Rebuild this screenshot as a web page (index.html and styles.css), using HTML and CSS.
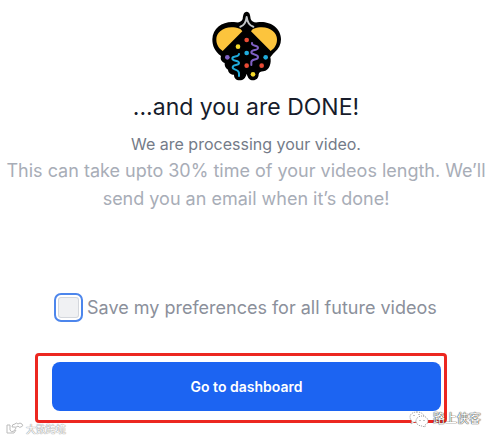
FILE: index.html
```
<!DOCTYPE html>
<html lang="en">
<head>
<meta charset="UTF-8">
<meta name="viewport" content="width=device-width, initial-scale=1.0">
<title>Processing your video</title>
<link rel="stylesheet" href="styles.css">
</head>
<body>
<main class="done">
    <!-- party popper logo -->
    <svg class="logo" viewBox="0 0 276 246" aria-hidden="true">
        <path d="M140 20C149 20 151 31 152 42C155 49 162 53 172 52C205 46 243 66 243 103C243 119 236 132 224 142C217 149 214 153 211 157C215 173 209 197 190 199C182 199 178 201 176 208C176 219 169 226 159 226C149 226 144 220 140 206C136 220 130 226 119 226C108 226 102 219 102 209C93 209 85 204 84 194C77 190 73 183 74 174C64 170 60 162 63 153C44 139 37 123 37 103C38 66 74 46 108 52C118 53 125 49 128 42C129 31 131 20 140 20Z" fill="#000"/>
        <path d="M119 71C79 57 49 79 49 103C49 119 56 130 68 138L127 79C125 75 122 72 119 71Z" fill="#fcc43d"/>
        <path d="M161 71C201 57 231 79 231 103C231 119 224 130 212 138L153 79C155 75 158 72 161 71Z" fill="#fcc43d"/>
        <path d="M121 65C132 62 138 52 140 36C142 52 149 62 160 65" fill="none" stroke="#c4c7c9" stroke-width="6" stroke-linecap="round" stroke-linejoin="round"/>
        <path d="M117 147C116 159 96 151 97 161C98 170 117 164 117 174C117 183 98 177 98 187C98 197 118 190 117 207V213" fill="none" stroke="#20acdc" stroke-width="6" stroke-linecap="round"/>
        <path d="M156 114C154 126 175 119 174 129C173 138 154 132 154 142C154 151 175 146 174 157C173 167 153 160 154 172V180" fill="none" stroke="#8061c5" stroke-width="6" stroke-linecap="round"/>
        <circle cx="140" cy="105" r="7" fill="#e94b35"/>
        <circle cx="140" cy="182" r="7" fill="#e94b35"/>
        <circle cx="185" cy="182" r="7" fill="#e94b35"/>
        <circle cx="114" cy="125" r="7" fill="#f5da2a"/>
        <circle cx="159" cy="208" r="7" fill="#f5da2a"/>
        <circle cx="140" cy="144" r="7" fill="#20acdc"/>
        <circle cx="197" cy="157" r="7" fill="#20acdc"/>
        <circle cx="82" cy="157" r="7" fill="#8061c5"/>
    </svg>

    <h1>...and you are DONE!</h1>
    <p class="status">We are processing your video.</p>
    <p class="note">This can take upto 30% time of your videos length. We’ll send you an email when it’s done!</p>

    <label class="preference" for="savePreferences">
        <input type="checkbox" id="savePreferences">
        Save my preferences for all future videos
    </label>

    <div class="highlight">
        <button type="button" class="dashboard-button">Go to dashboard</button>
    </div>
</main>

<!-- watermarks over the page corners -->
<div class="mark mark-left">
    <svg class="mark-logo" viewBox="0 0 18 14" aria-hidden="true">
        <path d="M1 3H4V8Q5 11 8 9L10 6M1 3V11H8L10 8M6 5Q6 2 9 2Q10 0 12 2Q14 0 16 2Q18 4 15 5Q13 6 12 4Q10 6 8 5Z"/>
    </svg>
    <span>大数跨境</span>
</div>
<div class="mark mark-right">
    <svg class="mark-chat" viewBox="0 0 20 18" aria-hidden="true">
        <path class="bubble" d="M8 2C4 2 1 4 1 7C1 9 2 10 3 11L2 14L5 12H8C12 12 15 10 15 7C15 4 12 2 8 2Z"/>
        <path class="bubble" d="M13 6C10 6 7 8 7 11C7 14 10 16 13 16L16 17V15C18 14 19 13 19 11C19 8 16 6 13 6Z"/>
        <path class="eyes" d="M5 5V6M10 4V5M11 10V11M15 10V11"/>
    </svg>
    <span>路上侠客</span>
</div>
</body>
</html>
```
FILE: styles.css
```
* {
    box-sizing: border-box;
}
body {
    position: relative;
    margin: 0;
    min-height: 100vh;
    background-color: #fff;
    font-family: Inter, "Noto Sans CJK SC", sans-serif;
}
.done {
    display: flex;
    flex-direction: column;
    align-items: center;
    padding: 5px 4px 16px 0;
    text-align: center;
}
.logo {
    width: 92px;
    height: 82px;
}
h1 {
    margin: 4px 0 8px;
    color: #171c2b;
    font-size: 23px;
    font-weight: 400;
    line-height: 32px;
}
p {
    margin: 0;
}
.status {
    color: #747b88;
    font-size: 16px;
    line-height: 26px;
}
.note {
    padding: 0 4px;
    color: #a8adb7;
    font-size: 18px;
    line-height: 28px;
}
.preference {
    display: flex;
    align-items: center;
    align-self: flex-start;
    gap: 4px;
    margin: 80px 0 31px;
    padding-left: 54px;
    color: #8b909b;
    font-size: 18px;
    line-height: 28px;
}
.preference input {
    appearance: none;
    flex: none;
    width: 29px;
    height: 29px;
    margin: 0;
    border: 2px solid #4d86ec;
    border-radius: 7px;
    background-color: #f0f1f3;
    box-shadow: inset 0 0 0 2px #fff, inset 0 0 0 3px #d4d7dc;
}
.highlight {
    align-self: stretch;
    margin: 0 45px 0 35px;
    padding: 6px 3px 9px 14px;
    border: 3px solid #ec2720;
    border-radius: 4px;
}
.dashboard-button {
    display: block;
    width: 100%;
    padding: 14px;
    border: none;
    border-radius: 8px;
    background-color: #1c64f2;
    color: #fff;
    font-family: inherit;
    font-size: 14px;
    font-weight: 600;
    line-height: 21px;
}
.mark {
    position: absolute;
    display: flex;
    align-items: center;
    white-space: nowrap;
}
.mark-left {
    bottom: 4px;
    left: 6px;
    gap: 2px;
    color: #fff;
    font-size: 10px;
    line-height: 14px;
    text-shadow: 0 0 1px #888, 0 0 1px #888;
}
.mark-logo {
    width: 18px;
    height: 14px;
    fill: none;
    stroke: #bbb;
    stroke-width: 1;
}
.mark-right {
    right: 15px;
    bottom: 12px;
    gap: 4px;
    color: #fff;
    font-size: 12px;
    line-height: 18px;
    text-shadow: 0 0 1px #222, 0 0 1px #222;
}
.mark-chat {
    width: 20px;
    height: 18px;
}
.bubble {
    fill: #fff;
    stroke: #999;
    stroke-width: 1;
    stroke-dasharray: 1 1;
}
.eyes {
    fill: none;
    stroke: #888;
    stroke-width: 1;
}
```
